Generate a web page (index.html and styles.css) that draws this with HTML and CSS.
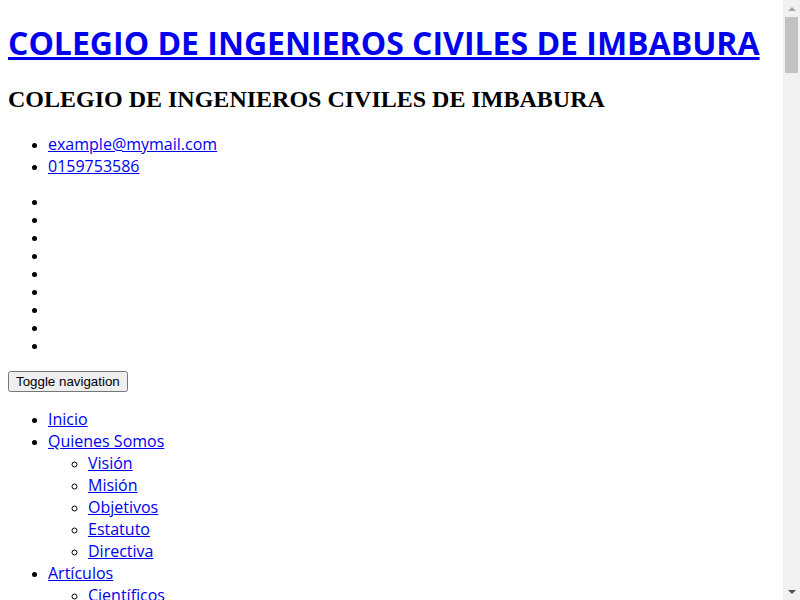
FILE: index.html
```html
<!DOCTYPE html>
<html lang="es">
<head>
<meta charset="utf-8">
<title>Colegio de Ingenieros Civiles de Imbabura</title>
<link rel="stylesheet" href="styles.css">
</head>
<body>
<header>
  <h1 class="site-title"><a href="#">COLEGIO DE INGENIEROS CIVILES DE IMBABURA</a></h1>
  <h2>COLEGIO DE INGENIEROS CIVILES DE IMBABURA</h2>
  <ul>
    <li><a href="#">example@mymail.com</a></li>
    <li><a href="#">0159753586</a></li>
  </ul>
  <ul>
    <li></li><li></li><li></li><li></li><li></li><li></li><li></li><li></li><li></li>
  </ul>
  <button type="button">Toggle navigation</button>
  <ul>
    <li><a href="#">Inicio</a></li>
    <li><a href="#">Quienes Somos</a>
      <ul>
        <li><a href="#">Visión</a></li>
        <li><a href="#">Misión</a></li>
        <li><a href="#">Objetivos</a></li>
        <li><a href="#">Estatuto</a></li>
        <li><a href="#">Directiva</a></li>
      </ul>
    </li>
    <li><a href="#">Artículos</a>
      <ul>
        <li><a href="#">Científicos</a></li>
        <li><a href="#">Técnicos</a></li>
        <li><a href="#">Opinión</a></li>
      </ul>
    </li>
    <li><a href="#">Servicios</a></li>
    <li><a href="#">Noticias</a></li>
    <li><a href="#">Galería</a></li>
    <li><a href="#">Contactos</a></li>
  </ul>
</header>
<main class="content">
  <section class="block">
    <h3>Bienvenidos</h3>
    <p>El Colegio de Ingenieros Civiles de Imbabura agrupa a los profesionales de la ingeniería civil de la provincia, promoviendo su desarrollo técnico, científico y ético al servicio de la sociedad.</p>
  </section>
  <section class="block">
    <h3>Noticias</h3>
    <p>Próximamente se publicarán las actividades, cursos y eventos organizados por el colegio.</p>
  </section>
  <section class="block">
    <h3>Cursos</h3>
    <p>Capacitación continua para los profesionales afiliados.</p>
  </section>
  <section class="block">
    <h3>Eventos</h3>
    <p>Agenda de eventos institucionales y sociales.</p>
  </section>
  <section class="block">
    <h3>Galería</h3>
    <p>Fotografías de las actividades del colegio.</p>
  </section>
  <section class="block">
    <h3>Contactos</h3>
    <p>Ibarra, Imbabura - Ecuador</p>
  </section>
</main>
<footer>
  <p>© Colegio de Ingenieros Civiles de Imbabura</p>
</footer>
<div class="scrollbar" aria-hidden="true">
  <span class="sb-arrow sb-up"></span>
  <span class="sb-track"><span class="sb-thumb"></span></span>
  <span class="sb-arrow sb-down"></span>
</div>
</body>
</html>
```
FILE: styles.css
```css
html {
  scrollbar-width: none;
}
body {
  margin: 8px;
  font-family: "Liberation Serif", "Times New Roman", serif;
  color: #000;
  background: #fff;
}
a {
  font-family: "Open Sans", sans-serif;
  color: #0000ee;
}
.site-title {
  margin-top: 0.42em;
}
button {
  font-family: "Liberation Sans", Arial, sans-serif;
}
.block {
  min-height: 900px;
}

/* decorative scrollbar overlay */
.scrollbar {
  position: fixed;
  top: 0;
  right: 0;
  width: 17px;
  height: 100vh;
  background: #f1f1f1;
  display: flex;
  flex-direction: column;
  align-items: center;
}
.sb-arrow {
  flex: 0 0 17px;
  width: 17px;
  display: flex;
  align-items: center;
  justify-content: center;
}
.sb-arrow::before {
  content: "";
  width: 0;
  height: 0;
  border-left: 4px solid transparent;
  border-right: 4px solid transparent;
}
.sb-up::before {
  border-bottom: 4px solid #a3a3a3;
}
.sb-down::before {
  border-top: 4px solid #505050;
}
.sb-track {
  flex: 1;
  width: 17px;
  display: flex;
  justify-content: center;
}
.sb-thumb {
  width: 13px;
  height: 56px;
  background: #c1c1c1;
}
```
